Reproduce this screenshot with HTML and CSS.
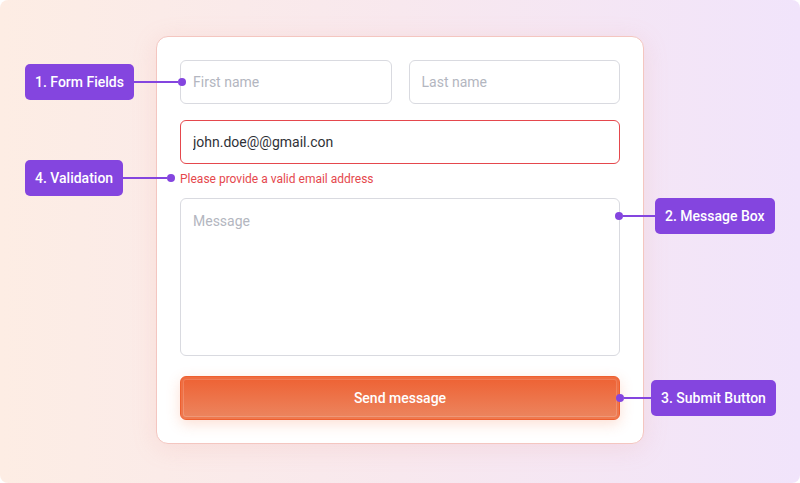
FILE: index.html
```html
<!DOCTYPE html>
<html lang="en">
<head>
  <meta charset="UTF-8">
  <meta name="viewport" content="width=device-width, initial-scale=1.0">
  <title>Contact form anatomy</title>
  <link rel="stylesheet" href="styles.css">
</head>
<body>
  <div class="stage">
    <form class="card" onsubmit="return false">
      <div class="row">
        <input class="field" type="text" placeholder="First name">
        <input class="field" type="text" placeholder="Last name">
      </div>
      <input class="field field-email invalid" type="text" value="john.doe@@gmail.con">
      <p class="error">Please provide a valid email address</p>
      <textarea class="field field-message" placeholder="Message"></textarea>
      <button class="send" type="submit">Send message</button>
    </form>

    <div class="note note-fields">
      <span class="tag">1. Form Fields</span><span class="line"></span><span class="dot"></span>
    </div>
    <div class="note note-validation">
      <span class="tag">4. Validation</span><span class="line"></span><span class="dot"></span>
    </div>
    <div class="note note-message right">
      <span class="dot"></span><span class="line"></span><span class="tag">2. Message Box</span>
    </div>
    <div class="note note-submit right">
      <span class="dot"></span><span class="line"></span><span class="tag">3. Submit Button</span>
    </div>
  </div>
</body>
</html>
```

FILE: styles.css
```css
* {
  box-sizing: border-box;
}
body {
  margin: 0;
  background: #fff;
  font-family: Roboto, "Liberation Sans", sans-serif;
}
.stage {
  position: relative;
  width: 800px;
  height: 483px;
  border-radius: 8px;
  background: linear-gradient(90deg, #fdede4 0%, #f8e8ee 50%, #f1e4fb 100%);
  display: flex;
  justify-content: center;
  padding-top: 36px;
}
.card {
  width: 488px;
  height: 408px;
  background: #fff;
  border: 1px solid #f4c6c0;
  border-radius: 12px;
  padding: 23px;
  box-shadow: 0 4px 24px rgba(240, 150, 140, 0.18);
  display: flex;
  flex-direction: column;
}
.row {
  display: grid;
  grid-template-columns: 1fr 1fr;
  gap: 17px;
}
.field {
  display: block;
  width: 100%;
  height: 44px;
  border: 1px solid #d9dae0;
  border-radius: 6px;
  padding: 0 12px;
  font-family: inherit;
  font-size: 14px;
  color: #2f3137;
  background: #fff;
  outline: none;
}
.field::placeholder {
  color: #b3b6c0;
}
.field-email {
  margin-top: 16px;
}
.invalid {
  border-color: #e5484d;
}
.error {
  margin: 8px 0 12px;
  font-size: 12px;
  line-height: 14px;
  color: #e5484d;
}
.field-message {
  height: 158px;
  padding: 14px 12px;
  resize: none;
}
.send {
  margin-top: 20px;
  height: 44px;
  border: 1px solid #ee5f2f;
  border-radius: 6px;
  background: linear-gradient(180deg, #ee6133 0%, #ec8660 100%);
  box-shadow: inset 0 0 0 2px rgba(238, 100, 52, 0.6), inset 0 0 0 3px rgba(255, 255, 255, 0.16), 0 4px 14px rgba(240, 110, 60, 0.22);
  color: #fff;
  font-family: inherit;
  font-size: 14px;
  font-weight: 500;
  cursor: pointer;
}
.note {
  position: absolute;
  display: flex;
  align-items: center;
}
.tag {
  height: 36px;
  padding: 0 10px;
  display: flex;
  align-items: center;
  background: #8445df;
  border-radius: 5px;
  color: #fff;
  font-size: 14px;
  font-weight: 500;
  white-space: nowrap;
}
.line {
  height: 2px;
  width: 44px;
  background: #8445df;
}
.dot {
  width: 8px;
  height: 8px;
  border-radius: 50%;
  background: #8445df;
}
.note-fields {
  left: 25px;
  top: 64px;
}
.note-validation {
  left: 25px;
  top: 160px;
}
.note-message {
  left: 615px;
  top: 198px;
}
.note-message .line {
  width: 32px;
}
.note-submit {
  left: 616px;
  top: 380px;
}
.note-submit .line {
  width: 27px;
}
```
